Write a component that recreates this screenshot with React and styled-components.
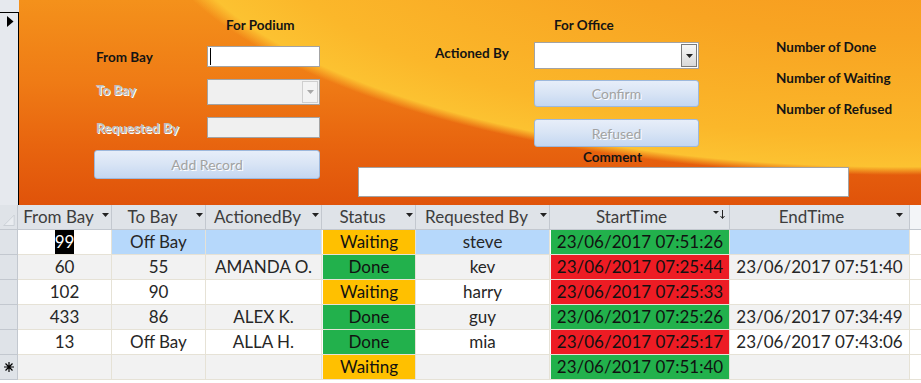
import React from 'react';
import styled, { createGlobalStyle } from 'styled-components';

const GlobalStyle = createGlobalStyle`
  html, body {
    margin: 0;
    padding: 0;
    background: #fff;
  }
  body {
    font-family: Lato, "Liberation Sans", sans-serif;
    width: 921px;
    height: 383px;
    overflow: hidden;
  }
`;

const Page = styled.div`
  width: 921px;
  height: 383px;
  display: flex;
  flex-direction: column;
  background: #fff;
  overflow: hidden;
`;

/* ---------- form header ---------- */

const FormArea = styled.div`
  display: flex;
  height: 205px;
  flex-shrink: 0;
`;

const SelectorStrip = styled.div`
  width: 19px;
  flex-shrink: 0;
  background: #e6e9ee;
  padding-top: 12px;
  box-sizing: border-box;
  display: flex;
  flex-direction: column;
`;

const CurrentRecord = styled.div`
  flex: 1;
  border-top: 1px solid #000;
  border-right: 1px solid #000;
  display: flex;
  justify-content: center;
  padding-top: 3px;
  padding-left: 2px;
`;

const FormBody = styled.div`
  flex: 1;
  display: flex;
  padding-left: 75px;
  background:
    radial-gradient(760px 275px at 881px -100px, #f6921c 0%, #f8a422 50%, #fbb72a 86%, #fcc231 97%, rgba(242, 140, 24, 0) 100%),
    linear-gradient(180deg, #f4911b 0%, #ef7b15 40%, #e8650f 70%, #e0530a 100%);
`;

const Section = styled.div`
  display: flex;
  flex-direction: column;
  width: ${p => p.$width}px;
  margin-left: ${p => p.$offset || 0}px;
  flex-shrink: 0;
`;

const BoldText = styled.div`
  font-weight: 700;
  font-size: 13.5px;
  line-height: 16px;
  color: #141414;
  white-space: nowrap;
  margin-top: ${p => p.$top || 0}px;
  margin-left: ${p => p.$indent || 0}px;
`;

const FieldRow = styled.div`
  display: flex;
  align-items: center;
  margin-top: ${p => p.$top}px;
`;

const FieldLabel = styled.div`
  width: ${p => p.$width}px;
  padding-left: ${p => p.$indent || 0}px;
  padding-bottom: ${p => p.$lift || 0}px;
  box-sizing: border-box;
  font-weight: 700;
  font-size: 13.5px;
  white-space: nowrap;
  color: ${p => (p.$disabled ? '#bdbdbd' : '#141414')};
  text-shadow: ${p => (p.$disabled ? '1px 1px 0 #fff' : 'none')};
`;

const TextBox = styled.div`
  width: ${p => p.$width}px;
  height: ${p => p.$height}px;
  box-sizing: border-box;
  border: 1px solid #a3a3a3;
  background: ${p => (p.$disabled ? '#f0f0f0' : '#fff')};
  margin-top: ${p => p.$top || 0}px;
  margin-left: ${p => p.$indent || 0}px;
  display: flex;
  align-items: center;
  padding-left: 2px;
`;

const Caret = styled.span`
  width: 1px;
  height: 17px;
  background: #000;
`;

const Combo = styled.div`
  width: ${p => p.$width}px;
  height: ${p => p.$height}px;
  box-sizing: border-box;
  border: 1px solid #a3a3a3;
  background: ${p => (p.$disabled ? '#f0f0f0' : '#fff')};
  display: flex;
  justify-content: flex-end;
  padding: 1px;
`;

const ComboButton = styled.div`
  width: 16px;
  box-sizing: border-box;
  border: 1px solid ${p => (p.$disabled ? '#cfcfcf' : '#7a7a7a')};
  background: ${p => (p.$disabled ? '#f3f3f3' : 'linear-gradient(180deg, #f7f7f7, #d9d9d9)')};
  display: flex;
  align-items: center;
  justify-content: center;
`;

const FormButton = styled.div`
  width: ${p => p.$width}px;
  height: ${p => p.$height}px;
  margin-top: ${p => p.$top || 0}px;
  margin-left: ${p => p.$indent || 0}px;
  box-sizing: border-box;
  border: 1px solid #9db8dc;
  border-radius: 3px;
  background: linear-gradient(180deg, #e7eef9 0%, #d8e4f5 50%, #c4d7f1 100%);
  display: flex;
  align-items: center;
  justify-content: center;
  font-size: 14px;
  color: #a2a2a2;
  text-shadow: 1px 1px 0 #fff;
`;

const TopRow = styled.div`
  display: flex;
`;

const Counts = styled.div`
  display: flex;
  flex-direction: column;
  gap: 15px;
  padding-top: 39px;
  margin-left: 77px;
`;

/* ---------- datasheet ---------- */

const Sheet = styled.div`
  display: grid;
  grid-template-columns: 18px 94px 94px 116px 94px 134px 180px 180px 11px;
  grid-auto-rows: 25px;
  font-size: 17px;
`;

const HeadCell = styled.div`
  box-sizing: border-box;
  background: ${p => (p.$filler ? '#f3f5f8' : '#dfe3e8')};
  border-right: ${p => (p.$filler ? 'none' : '1px solid #c3c8cf')};
  border-bottom: 1px solid #c3c8cf;
  color: #3d3d3d;
  display: flex;
  align-items: center;
  white-space: nowrap;
  overflow: hidden;
`;

const HeadText = styled.span`
  flex: 1;
  text-align: center;
  line-height: 24px;
`;

const HeadArrow = styled.span`
  width: 12px;
  display: flex;
  justify-content: center;
  margin-bottom: 5px;
  margin-right: ${p => (p.$wide ? 4 : 0)}px;
`;

const RowSelector = styled.div`
  box-sizing: border-box;
  background: #dfe3e8;
  border-right: 1px solid #c3c8cf;
  border-bottom: 1px solid #c3c8cf;
  display: flex;
  align-items: center;
  justify-content: center;
`;

const Cell = styled.div`
  box-sizing: border-box;
  background: ${p => (p.$selected ? '#b6d8fb' : p.$alt ? '#f2f2f2' : '#fff')};
  border-right: ${p => (p.$filler ? 'none' : '1px solid #e6e2d6')};
  border-bottom: 1px solid #e6e2d6;
  color: #262626;
  display: flex;
  align-items: stretch;
  justify-content: center;
  line-height: 24px;
  white-space: nowrap;
  overflow: hidden;
`;

const Fill = styled.div`
  flex: 1;
  margin-left: 1px;
  background: ${p => p.$color};
  color: #111;
  text-align: center;
`;

const SelectedText = styled.span`
  background: #000;
  color: #fff;
`;

const COLORS = {
  Waiting: '#ffc000',
  Done: '#22b14c',
  green: '#22b14c',
  red: '#ed1c24',
};

const rows = [
  { from: '99', to: 'Off Bay', by: '', status: 'Waiting', req: 'steve', start: '23/06/2017 07:51:26', startColor: 'green', end: '', selected: true },
  { from: '60', to: '55', by: 'AMANDA O.', status: 'Done', req: 'kev', start: '23/06/2017 07:25:44', startColor: 'red', end: '23/06/2017 07:51:40' },
  { from: '102', to: '90', by: '', status: 'Waiting', req: 'harry', start: '23/06/2017 07:25:33', startColor: 'red', end: '' },
  { from: '433', to: '86', by: 'ALEX K.', status: 'Done', req: 'guy', start: '23/06/2017 07:25:26', startColor: 'green', end: '23/06/2017 07:34:49' },
  { from: '13', to: 'Off Bay', by: 'ALLA H.', status: 'Done', req: 'mia', start: '23/06/2017 07:25:17', startColor: 'red', end: '23/06/2017 07:43:06' },
  { from: '', to: '', by: '', status: 'Waiting', req: '', start: '23/06/2017 07:51:40', startColor: 'green', end: '', isNew: true },
];

const columns = ['From Bay', 'To Bay', 'ActionedBy', 'Status', 'Requested By', 'StartTime', 'EndTime'];

const DropArrow = ({ color = '#222' }) => (
  <svg width="7" height="4" viewBox="0 0 7 4">
    <path d="M0 0h7L3.5 4z" fill={color} />
  </svg>
);

const SortArrow = () => (
  <svg width="12" height="9" viewBox="0 0 12 9">
    <path d="M0 1h6L3 4z" fill="#222" />
    <path d="M9.5 0v8" stroke="#222" strokeWidth="1" />
    <path d="M7.5 6l2 2.5 2-2.5" stroke="#222" strokeWidth="1" fill="none" />
  </svg>
);

const RecordPointer = () => (
  <svg width="7" height="11" viewBox="0 0 7 11">
    <path d="M0 0l6.5 5.5L0 11z" fill="#000" />
  </svg>
);

const SelectAllCorner = () => (
  <svg width="18" height="24" viewBox="0 0 18 24">
    <path d="M4 21L15 10v11z" fill="#e9ecf0" stroke="#c9ced5" strokeWidth="1" />
  </svg>
);

const NewRecordStar = () => (
  <svg width="10" height="10" viewBox="0 0 10 10">
    <g stroke="#000" strokeWidth="1.2">
      <path d="M5 0v10M0 5h10M1.5 1.5l7 7M8.5 1.5l-7 7" />
    </g>
  </svg>
);

const App = () => {
  return (
    <>
      <GlobalStyle />
      <Page>
        <FormArea>
          <SelectorStrip>
            <CurrentRecord>
              <RecordPointer />
            </CurrentRecord>
          </SelectorStrip>

          <FormBody>
            <Section $width={226}>
              <BoldText $top={17} $indent={132}>For Podium</BoldText>
              <FieldRow $top={13}>
                <FieldLabel $width={113} $indent={2}>From Bay</FieldLabel>
                <TextBox $width={113} $height={21}>
                  <Caret />
                </TextBox>
              </FieldRow>
              <FieldRow $top={12}>
                <FieldLabel $width={113} $indent={2} $lift={5} $disabled>To Bay</FieldLabel>
                <Combo $width={113} $height={26} $disabled>
                  <ComboButton $disabled>
                    <DropArrow color="#a8a8a8" />
                  </ComboButton>
                </Combo>
              </FieldRow>
              <FieldRow $top={12}>
                <FieldLabel $width={113} $indent={2} $disabled>Requested By</FieldLabel>
                <TextBox $width={113} $height={21} $disabled />
              </FieldRow>
              <FormButton $width={226} $height={29} $top={12}>Add Record</FormButton>
            </Section>

            <Section $width={563} $offset={38}>
              <TopRow>
                <Section $width={341}>
                  <BoldText $top={17} $indent={196}>For Office</BoldText>
                  <FieldRow $top={9}>
                    <FieldLabel $width={176} $indent={77} $lift={6}>Actioned By</FieldLabel>
                    <Combo $width={165} $height={27}>
                      <ComboButton>
                        <DropArrow />
                      </ComboButton>
                    </Combo>
                  </FieldRow>
                  <FormButton $width={165} $height={27} $top={11} $indent={176}>Confirm</FormButton>
                  <FormButton $width={165} $height={28} $top={12} $indent={176}>Refused</FormButton>
                </Section>
                <Counts>
                  <BoldText>Number of Done</BoldText>
                  <BoldText>Number of Waiting</BoldText>
                  <BoldText>Number of Refused</BoldText>
                </Counts>
              </TopRow>
              <BoldText $top={2} $indent={225}>Comment</BoldText>
              <TextBox $width={491} $height={30} $top={2} />
            </Section>
          </FormBody>
        </FormArea>

        <Sheet>
          <RowSelector>
            <SelectAllCorner />
          </RowSelector>
          {columns.map(col => (
            <HeadCell key={col}>
              <HeadText>{col}</HeadText>
              {col === 'StartTime' ? (
                <HeadArrow $wide>
                  <SortArrow />
                </HeadArrow>
              ) : (
                <HeadArrow $wide={col === 'EndTime'}>
                  <DropArrow />
                </HeadArrow>
              )}
            </HeadCell>
          ))}
          <HeadCell $filler />

          {rows.map((r, i) => {
            const alt = i % 2 === 1;
            return (
              <React.Fragment key={i}>
                <RowSelector>{r.isNew && <NewRecordStar />}</RowSelector>
                <Cell $alt={alt}>
                  {r.selected ? <SelectedText>{r.from}</SelectedText> : r.from}
                </Cell>
                <Cell $alt={alt} $selected={r.selected}>{r.to}</Cell>
                <Cell $alt={alt} $selected={r.selected}>{r.by}</Cell>
                <Cell $alt={alt}>
                  <Fill $color={COLORS[r.status]}>{r.status}</Fill>
                </Cell>
                <Cell $alt={alt} $selected={r.selected}>{r.req}</Cell>
                <Cell $alt={alt}>
                  <Fill $color={COLORS[r.startColor]}>{r.start}</Fill>
                </Cell>
                <Cell $alt={alt} $selected={r.selected}>{r.end}</Cell>
                <Cell $filler />
              </React.Fragment>
            );
          })}
        </Sheet>
      </Page>
    </>
  );
};

export default App;
